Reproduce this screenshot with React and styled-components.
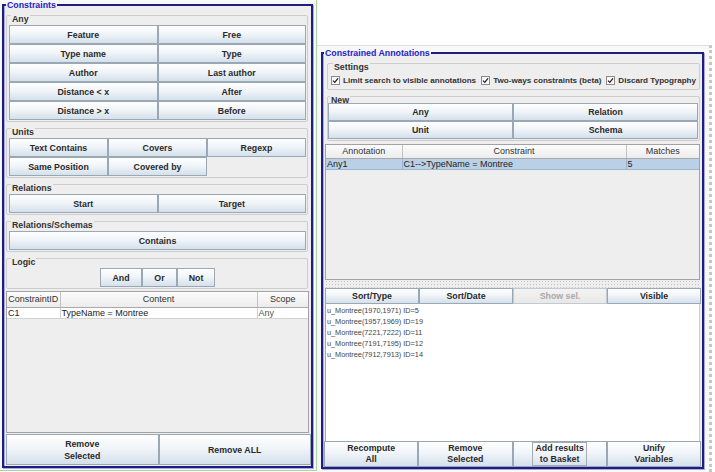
import React from 'react'
import styled, { createGlobalStyle } from 'styled-components'

const GlobalStyle = createGlobalStyle`
	html, body {
		margin: 0;
		padding: 0;
		background: #fff;
	}
	body {
		font-family: "Liberation Sans", Arial, sans-serif;
	}
	* {
		box-sizing: border-box;
	}
`

const FONT = `"Liberation Sans", Arial, sans-serif`

const Root = styled.div`
	display: flex;
	align-items: flex-start;
	width: 715px;
	height: 472px;
	overflow: hidden;
	background: #fff;
`

const LeftWrap = styled.div`
	flex: none;
	width: 317px;
	height: 471px;
	padding: 1px 0 0 2px;
	background: #f8f8f8;
	border-right: 1px solid #a9d3a2;
	border-bottom: 1px solid #a9d3a2;
`

const RightWrap = styled.div`
	flex: none;
	width: 398px;
	height: 472px;
	padding-top: 45px;
	background: #fff;
`

const RightFrame = styled.div`
	width: 395px;
	height: 427px;
	padding: 3px 4px 0 4px;
	border-top: 1px solid #dcdcdc;
	border-right: 3px dotted #c6c6c6;
	background: #f8f8f8;
`

const Panel = styled.fieldset`
	display: flex;
	flex-direction: column;
	margin: 0;
	min-width: 0;
	width: ${p => p.$w}px;
	height: ${p => p.$h}px;
	padding: ${p => p.$pad};
	border: 2px solid #1d1d82;
	background: #eeeeee;
	box-shadow: 1px 1px 0 #a9a9dc, inset 1px 0 0 #a9a9dc;
`

const PanelTitle = styled.legend`
	margin-left: 0;
	padding: 0 1px;
	font: bold 8.8px ${FONT};
	line-height: 8px;
	color: #2424c6;
`

const Group = styled.fieldset`
	flex: none;
	margin: ${p => p.$margin || '0 3px 0 0'};
	min-width: 0;
	padding: ${p => p.$pad || '4px 1px 1px 2px'};
	border: 1px solid #cdcdcd;
	border-radius: 2px;
`

const GroupTitle = styled.legend`
	margin-left: 2px;
	padding: 8px 1px 0;
	font: bold 8.8px ${FONT};
	line-height: 4px;
	color: #333;
`

const ButtonGrid = styled.div`
	display: grid;
	grid-template-columns: ${p => p.$cols || 'repeat(2, 1fr)'};
	grid-auto-rows: ${p => p.$rowH || 19}px;
	margin: ${p => p.$margin || '0'};
`

const Btn = styled.button`
	margin: 0;
	padding: 0;
	min-width: 0;
	font: bold 8.8px ${FONT};
	line-height: ${p => p.$lh || 10}px;
	color: #2a2a2a;
	border: 1px solid #9aa8b6;
	background: linear-gradient(#fefefe 0%, #f1f5f9 45%, #d4e0eb 100%);
	text-align: center;

	&:disabled {
		color: #a9a9a9;
		border-color: #c3c9cf;
		background: linear-gradient(#f3f3f3, #e8e8e8);
	}
`

const Focus = styled.span`
	display: inline-block;
	padding: 0 2px;
	border: 1px solid #a4abb3;
`

const LogicRow = styled.div`
	display: flex;
	justify-content: center;
	height: 19px;
`

const LogicBtn = styled(Btn)`
	width: ${p => p.$w}px;
`

const TableBox = styled.div`
	flex: 1;
	margin: ${p => p.$margin || '0'};
	border: 1px solid #a2a2a2;
	background: #eeeeee;
	overflow: hidden;
`

const Table = styled.table`
	width: 100%;
	border-collapse: collapse;
	table-layout: fixed;
	font: 9px ${FONT};
	color: #222;
`

const Th = styled.th`
	height: ${p => p.$h || 15}px;
	padding: 0;
	font-weight: normal;
	text-align: center;
	color: #333;
	background: linear-gradient(#fcfcfc, #ececec);
	border-right: 1px solid #c2c2c2;
	border-bottom: 1px solid #a9a9a9;

	&:last-child {
		border-right: none;
	}
`

const Td = styled.td`
	height: 11px;
	padding: 0 1px;
	line-height: 10px;
	white-space: nowrap;
	overflow: hidden;
	color: ${p => (p.$muted ? '#555' : '#222')};
	background: ${p => (p.$selected ? '#b9d0e7' : '#fff')};
	border-right: 1px solid ${p => (p.$selected ? '#9db6cf' : '#d2d2d2')};
	border-bottom: 1px solid ${p => (p.$selected ? '#9db6cf' : '#d2d2d2')};

	&:last-child {
		border-right: none;
	}
`

const Settings = styled.div`
	display: flex;
	align-items: center;
	gap: 5px;
	height: 14px;
`

const Check = styled.label`
	display: flex;
	align-items: center;
	gap: 3px;
	font: bold 8.1px ${FONT};
	color: #333;
	white-space: nowrap;
`

const Box = styled.span`
	display: inline-flex;
	align-items: center;
	justify-content: center;
	width: 9px;
	height: 9px;
	border: 1px solid #8c8c8c;
	background: linear-gradient(#f4f4f4, #fff);
`

const Splitter = styled.div`
	flex: none;
	height: 8px;
	margin: 0 1px;
	background-image: radial-gradient(circle, #c4c4c4 0.7px, transparent 0.9px);
	background-size: 3px 3px;
`

const ResultList = styled.div`
	flex: none;
	height: 137px;
	margin: 0 1px;
	padding-top: 1px;
	background: #fff;
	border-left: 1px solid #9aa6b2;
	border-right: 1px solid #c9ced3;
`

const ResultItem = styled.div`
	padding-left: 1px;
	font: 7.3px ${FONT};
	line-height: 11px;
	color: #444;
	white-space: nowrap;
`

const CheckIcon = () => (
	<svg width='7' height='7' viewBox='0 0 7 7'>
		<path d='M1 3.6 L2.8 5.4 L6 1.4' fill='none' stroke='#222' strokeWidth='1.3' />
	</svg>
)

const anyButtons = [
	'Feature', 'Free',
	'Type name', 'Type',
	'Author', 'Last author',
	'Distance < x', 'After',
	'Distance > x', 'Before',
]

const results = [
	'u_Montree(1970,1971) ID=5',
	'u_Montree(1957,1969) ID=19',
	'u_Montree(7221,7222) ID=11',
	'u_Montree(7191,7195) ID=12',
	'u_Montree(7912,7913) ID=14',
]

const Constraints = () => (
	<Panel $w={311} $h={467} $pad='0 0 1px 2px'>
		<PanelTitle>Constraints</PanelTitle>

		<Group>
			<GroupTitle>Any</GroupTitle>
			<ButtonGrid>
				{anyButtons.map(b => <Btn key={b}>{b}</Btn>)}
			</ButtonGrid>
		</Group>

		<Group>
			<GroupTitle>Units</GroupTitle>
			<ButtonGrid $cols='repeat(3, 1fr)'>
				<Btn>Text Contains</Btn>
				<Btn>Covers</Btn>
				<Btn>Regexp</Btn>
				<Btn>Same Position</Btn>
				<Btn>Covered by</Btn>
			</ButtonGrid>
		</Group>

		<Group>
			<GroupTitle>Relations</GroupTitle>
			<ButtonGrid>
				<Btn>Start</Btn>
				<Btn>Target</Btn>
			</ButtonGrid>
		</Group>

		<Group>
			<GroupTitle>Relations/Schemas</GroupTitle>
			<ButtonGrid $cols='1fr'>
				<Btn>Contains</Btn>
			</ButtonGrid>
		</Group>

		<Group>
			<GroupTitle>Logic</GroupTitle>
			<LogicRow>
				<LogicBtn $w={42}>And</LogicBtn>
				<LogicBtn $w={35}>Or</LogicBtn>
				<LogicBtn $w={38}>Not</LogicBtn>
			</LogicRow>
		</Group>

		<TableBox $margin='2px 2px 0 0'>
			<Table>
				<colgroup>
					<col style={{ width: 53 }} />
					<col />
					<col style={{ width: 51 }} />
				</colgroup>
				<thead>
					<tr>
						<Th>ConstraintID</Th>
						<Th>Content</Th>
						<Th>Scope</Th>
					</tr>
				</thead>
				<tbody>
					<tr>
						<Td>C1</Td>
						<Td>TypeName = Montree</Td>
						<Td $muted>Any</Td>
					</tr>
				</tbody>
			</Table>
		</TableBox>

		<ButtonGrid $rowH={31} $margin='1px 0 0 0'>
			<Btn $lh={12}>Remove<br />Selected</Btn>
			<Btn>Remove ALL</Btn>
		</ButtonGrid>
	</Panel>
)

const Annotations = () => (
	<Panel $w={383} $h={420} $pad='0 1px'>
		<PanelTitle>Constrained Annotations</PanelTitle>

		<Group $margin='0 1px 0 3px' $pad='4px 2px 2px 3px'>
			<GroupTitle>Settings</GroupTitle>
			<Settings>
				<Check><Box><CheckIcon /></Box>Limit search to visible annotations</Check>
				<Check><Box><CheckIcon /></Box>Two-ways constraints (beta)</Check>
				<Check><Box><CheckIcon /></Box>Discard Typography</Check>
			</Settings>
		</Group>

		<Group $margin='0 1px 0 3px' $pad='1px 1px 1px 0'>
			<GroupTitle>New</GroupTitle>
			<ButtonGrid $rowH={18}>
				<Btn>Any</Btn>
				<Btn>Relation</Btn>
				<Btn>Unit</Btn>
				<Btn>Schema</Btn>
			</ButtonGrid>
		</Group>

		<TableBox $margin='3px 1px 0 1px'>
			<Table>
				<colgroup>
					<col style={{ width: 76 }} />
					<col />
					<col style={{ width: 73 }} />
				</colgroup>
				<thead>
					<tr>
						<Th $h={13}>Annotation</Th>
						<Th $h={13}>Constraint</Th>
						<Th $h={13}>Matches</Th>
					</tr>
				</thead>
				<tbody>
					<tr>
						<Td $selected>Any1</Td>
						<Td $selected>C1--&gt;TypeName = Montree</Td>
						<Td $selected>5</Td>
					</tr>
				</tbody>
			</Table>
		</TableBox>

		<Splitter />

		<ButtonGrid $cols='repeat(4, 1fr)' $rowH={16} $margin='0 0 0 1px'>
			<Btn>Sort/Type</Btn>
			<Btn>Sort/Date</Btn>
			<Btn disabled>Show sel.</Btn>
			<Btn>Visible</Btn>
		</ButtonGrid>

		<ResultList>
			{results.map(r => <ResultItem key={r}>{r}</ResultItem>)}
		</ResultList>

		<ButtonGrid $cols='repeat(4, 1fr)' $rowH={26}>
			<Btn $lh={11}>Recompute<br />All</Btn>
			<Btn $lh={11}>Remove<br />Selected</Btn>
			<Btn $lh={11}><Focus>Add results<br />to Basket</Focus></Btn>
			<Btn $lh={11}>Unify<br />Variables</Btn>
		</ButtonGrid>
	</Panel>
)

const App = () => {
	return (
		<Root>
			<GlobalStyle />
			<LeftWrap>
				<Constraints />
			</LeftWrap>
			<RightWrap>
				<RightFrame>
					<Annotations />
				</RightFrame>
			</RightWrap>
		</Root>
	)
}

export default App
